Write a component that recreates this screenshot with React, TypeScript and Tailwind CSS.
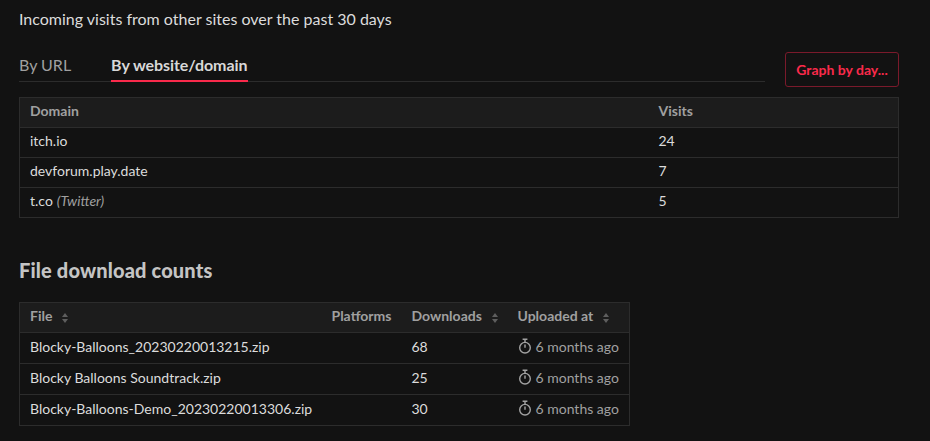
const sortIcon = (
  <svg width="6" height="10" viewBox="0 0 6 10" className="ml-[10px] inline-block fill-[#5e5e5e] align-[-2px]">
    <path d="M3 0 L6 4 H0 Z" />
    <path d="M0 6 H6 L3 10 Z" />
  </svg>
);

function Stopwatch() {
  return (
    <svg width="14" height="16" viewBox="0 0 14 16" fill="none" className="mr-[4px] inline-block stroke-[#a3a3a3] align-[-2px]">
      <circle cx="7" cy="9.7" r="5.3" strokeWidth="1.4" />
      <path d="M4.6 1.2 H9.4 M7 1.2 V4 M7 6.5 V9.7" strokeWidth="1.4" />
    </svg>
  );
}

const domains = [
  { domain: 'itch.io', visits: 24 },
  { domain: 'devforum.play.date', visits: 7 },
  { domain: 't.co', note: '(Twitter)', visits: 5 },
];

const files = [
  { name: 'Blocky-Balloons_20230220013215.zip', downloads: 68 },
  { name: 'Blocky Balloons Soundtrack.zip', downloads: 25 },
  { name: 'Blocky-Balloons-Demo_20230220013306.zip', downloads: 30 },
];

export default function App() {
  return (
    <div className="h-[441px] w-[930px] overflow-hidden bg-[#121212] pl-[19px] font-['Lato',sans-serif] text-[14px] text-[#dcdcdc]">
      <p className="h-[52px] pt-[7px] text-[16px] leading-[24px]">Incoming visits from other sites over the past 30 days</p>

      <div className="flex h-[35px] w-[880px] items-start justify-between">
        <div className="flex h-[30px] w-[746px] gap-[40px] border-b border-[#2c2c2c] text-[16px]">
          <span className="leading-[26px] text-[#a0a0a0]">By URL</span>
          <span className="h-[30px] border-b-2 border-[#fa2a4b] font-bold leading-[26px] tracking-[-0.06px] text-[#d8d8d8]">By website/domain</span>
        </div>
        <button className="h-[35px] w-[114px] rounded-[3px] border border-[#7a1a2b] pb-[1px] text-[14px] font-bold text-[#fa2a4b]">Graph by day...</button>
      </div>

      <table className="mt-[10px] w-[880px] table-fixed border-collapse border border-[#2c2c2c]">
        <thead>
          <tr className="h-[30px] bg-[#1c1c1c] text-left text-[#a0a0a0]">
            <th className="w-[629px] px-[10px] pb-[4px] pt-0 font-bold">Domain</th>
            <th className="px-[10px] pb-[4px] pt-0 font-bold">Visits</th>
          </tr>
        </thead>
        <tbody>
          {domains.map((row) => (
            <tr key={row.domain} className="h-[30px] border-t border-[#2c2c2c]">
              <td className="px-[10px] pb-[4px] pt-0">
                {row.domain}
                {row.note && <em className="ml-1 text-[#a0a0a0]">{row.note}</em>}
              </td>
              <td className="px-[10px] pb-[4px] pt-0">{row.visits}</td>
            </tr>
          ))}
        </tbody>
      </table>

      <h2 className="mt-[38px] h-[28px] text-[20px] font-black leading-[28px] tracking-[0.15px] text-[#c4c4c4]">File download counts</h2>

      <table className="mt-[18px] w-[611px] table-fixed border-collapse border border-[#2c2c2c]">
        <thead>
          <tr className="h-[30px] whitespace-nowrap bg-[#1c1c1c] text-left text-[#a0a0a0]">
            <th className="w-[302px] px-[10px] pb-[4px] pt-0 font-bold">File{sortIcon}</th>
            <th className="w-[80px] px-[10px] pb-[4px] pt-0 font-bold">Platforms</th>
            <th className="w-[106px] px-[10px] pb-[4px] pt-0 font-bold">Downloads{sortIcon}</th>
            <th className="px-[10px] pb-[4px] pt-0 font-bold">Uploaded at{sortIcon}</th>
          </tr>
        </thead>
        <tbody>
          {files.map((row) => (
            <tr key={row.name} className="h-[31px] border-t border-[#2c2c2c]">
              <td className="whitespace-nowrap px-[10px] pb-[3px] pt-0" colSpan={2}>{row.name}</td>
              <td className="px-[10px] pb-[3px] pt-0">{row.downloads}</td>
              <td className="whitespace-nowrap px-[10px] pb-[3px] pt-0 text-[#a0a0a0]">
                <Stopwatch />6 months ago
              </td>
            </tr>
          ))}
        </tbody>
      </table>
    </div>
  );
}
